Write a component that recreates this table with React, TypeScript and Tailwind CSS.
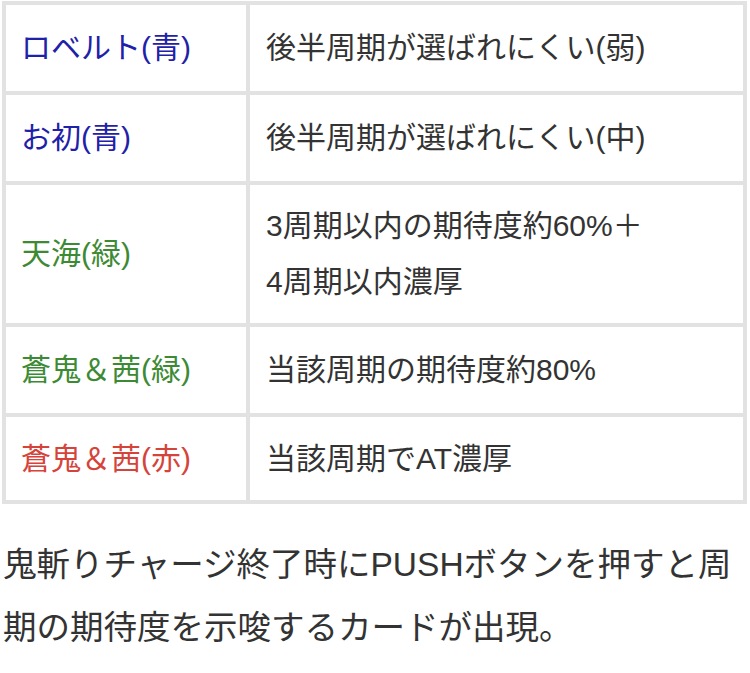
import React from "react";

const font = { fontFamily: '"Liberation Sans", "Noto Sans CJK JP", sans-serif' };

type Row = { label: string; color: string; lines: string[]; h?: string };

const rows: Row[] = [
  { label: "ロベルト(青)", color: "text-[#1f22a8]", lines: ["後半周期が選ばれにくい(弱)"] },
  { label: "お初(青)", color: "text-[#1f22a8]", lines: ["後半周期が選ばれにくい(中)"] },
  { label: "天海(緑)", color: "text-[#3d8a35]", lines: ["3周期以内の期待度約60%＋", "4周期以内濃厚"] },
  { label: "蒼鬼＆茜(緑)", color: "text-[#3d8a35]", lines: ["当該周期の期待度約80%"] },
  { label: "蒼鬼＆茜(赤)", color: "text-[#d5443b]", lines: ["当該周期でAT濃厚"] },
];

export default function App() {
  return (
    <div className="w-[750px] h-[673px] bg-white overflow-hidden" style={font}>
      <div className="pt-px pl-[2px]">
        <div className="w-[745px] bg-[#e2e2e2] px-[4px] pt-[4px] pb-[4px] grid grid-cols-[240px_1fr] gap-[4px]">
          {rows.map((r, i) => (
            <React.Fragment key={i}>
              <div
                className={`bg-white flex items-center pl-[15px] pr-2 text-[30px] leading-[56px] ${r.color} ${
                  i === 4 ? "min-h-[83px]" : "min-h-[86px]"
                }`}
              >
                {r.label}
              </div>
              <div
                className={`bg-white flex items-center pl-[16px] pr-2 py-[13px] text-[30px] leading-[56px] text-[#333333] ${
                  i === 4 ? "min-h-[83px]" : "min-h-[86px]"
                }`}
              >
                <div>
                  {r.lines.map((l, j) => (
                    <div key={j}>{l}</div>
                  ))}
                </div>
              </div>
            </React.Fragment>
          ))}
        </div>
      </div>
      <p className="mt-[29px] pl-[3px] text-[33.5px] leading-[63px] text-[#333333]">
        鬼斬りチャージ終了時にPUSHボタンを押すと周期の期待度を示唆するカードが出現。
      </p>
    </div>
  );
}
